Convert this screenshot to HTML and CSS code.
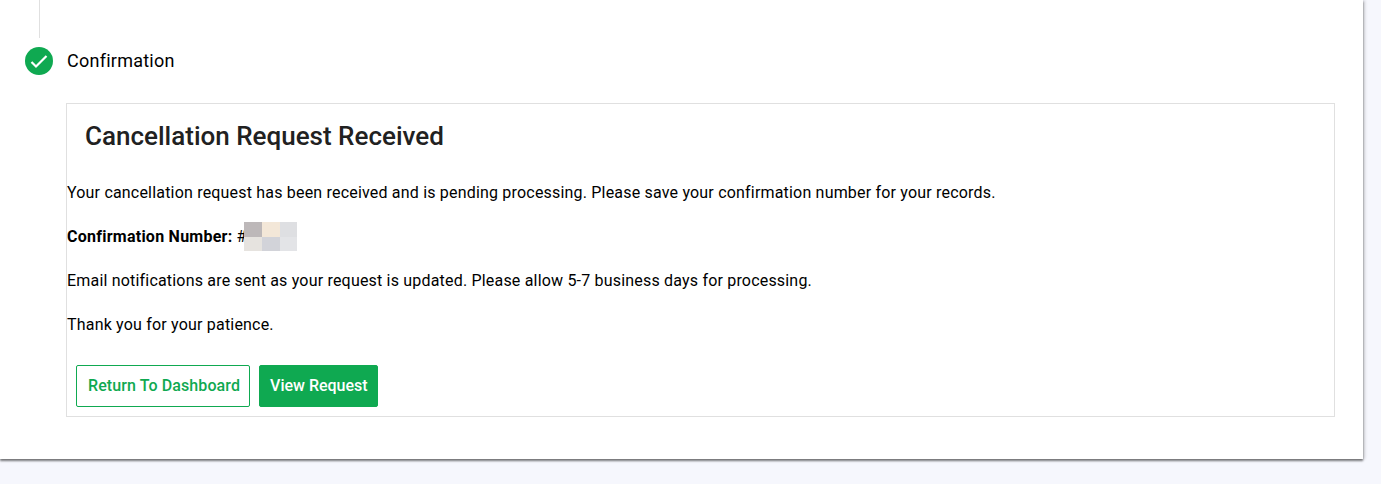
FILE: index.html
```html
<!DOCTYPE html>
<html lang="en">
  <head>
    <meta charset="UTF-8" />
    <title>Cancellation Request Received</title>
    <link rel="stylesheet" href="styles.css">
  </head>
  <body>
    <main class="page-card">
      <div class="step-line"></div>

      <div class="step-header">
        <span class="step-icon">
          <svg viewBox="0 0 28 28" width="28" height="28">
            <path d="M6.5 15l4.5 4.5L21.5 9" fill="none" stroke="#fff" stroke-width="2.2" />
          </svg>
        </span>
        <span class="step-title">Confirmation</span>
      </div>

      <section class="confirm-box">
        <h2>Cancellation Request Received</h2>
        <p>Your cancellation request has been received and is pending processing. Please save your confirmation number for your records.</p>
        <p><strong>Confirmation Number:</strong> #<span class="redacted"><i class="c1"></i><i class="c2"></i><i class="c3"></i><i class="c4"></i><i class="c5"></i><i class="c6"></i></span></p>
        <p>Email notifications are sent as your request is updated. Please allow 5-7 business days for processing.</p>
        <p>Thank you for your patience.</p>
        <div class="actions">
          <a href="#" class="btn btn-outline">Return To Dashboard</a>
          <a href="#" class="btn btn-solid">View Request</a>
        </div>
      </section>
    </main>
  </body>
</html>
```

FILE: styles.css
```css
:root {
  --green: #0fa951;
  --border: #e0e0e0;
  --page-bg: #f6f7fd;
}

* {
  box-sizing: border-box;
  margin: 0;
  padding: 0;
}

html,
body {
  height: 484px;
  overflow: hidden;
}

body {
  font-family: Roboto, sans-serif;
  font-size: 16px;
  line-height: 24px;
  background: var(--page-bg);
  color: #000;
}

a {
  text-decoration: none;
}

.page-card {
  width: 1363px;
  height: 459px;
  background: #fff;
  padding: 0 28px 0 25px;
  box-shadow: 0 2px 2px rgba(0, 0, 0, 0.5), 2px 0 3px rgba(0, 0, 0, 0.15);
}

.step-line {
  width: 1px;
  height: 38px;
  margin-left: 14px;
  background: #e0e0e0;
}

.step-header {
  display: flex;
  align-items: center;
  gap: 14px;
  margin-top: 9px;
  height: 28px;
}

.step-icon {
  width: 28px;
  height: 28px;
  border-radius: 50%;
  background: var(--green);
  display: flex;
}

.step-title {
  font-size: 18px;
  letter-spacing: 0.25px;
}

.confirm-box {
  margin: 28px 0 0 41px;
  height: 314px;
  border: 1px solid var(--border);
}

.confirm-box h2 {
  font-size: 26px;
  line-height: 32px;
  font-weight: 500;
  color: #212121;
  margin: 16px 0 29px 18px;
}

.confirm-box p {
  margin-bottom: 20px;
  letter-spacing: 0.19px;
}

.confirm-box strong {
  letter-spacing: 0.25px;
}

.redacted {
  display: inline-grid;
  grid-template-columns: 18px 18px 17px;
  grid-template-rows: 15px 14px;
  vertical-align: top;
  margin: -3px 0 -2px -3px;
}

.redacted i {
  display: block;
}

.c1 { background: #bdb8b9; }
.c2 { background: #f3e7d8; }
.c3 { background: #dedfe2; }
.c4 { background: #e6e3df; }
.c5 { background: #d2d3d9; }
.c6 { background: #e3e4e7; }

.actions {
  display: flex;
  gap: 9px;
  margin: 28px 0 0 9px;
}

.btn {
  height: 42px;
  border-radius: 2px;
  border: 1px solid var(--green);
  font-weight: 500;
  display: flex;
  align-items: center;
}

.btn-outline {
  padding: 0 9px 0 11px;
  color: var(--green);
  background: #fff;
  letter-spacing: 0.1px;
}

.btn-solid {
  padding: 0 9px 0 10px;
  color: #fff;
  background: var(--green);
}
```
